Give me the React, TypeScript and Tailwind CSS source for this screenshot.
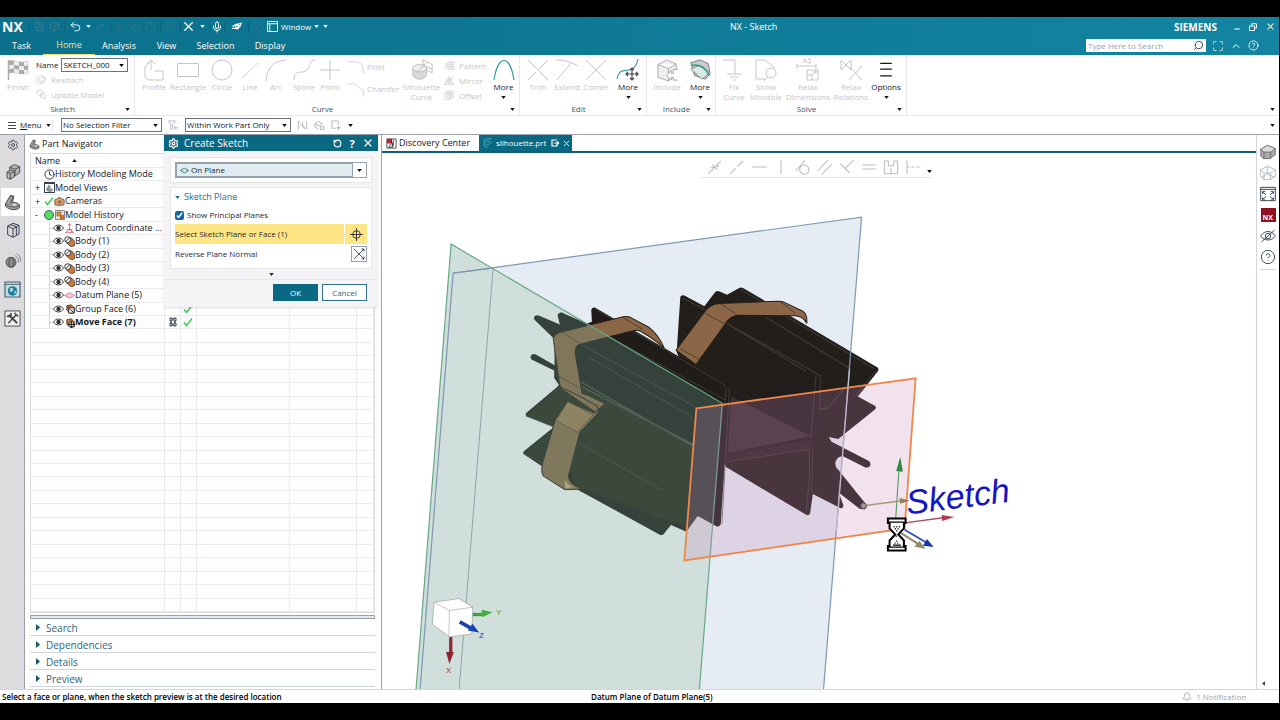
import React from 'react';
import {
  Bell, Box, Camera, ChevronUp, CircleHelp, Clipboard, Clock, Copy,
  Maximize, Mic, Minus, Printer, Redo2, RotateCcw, Save, Scissors, Search, Settings, Undo2, X,
} from 'lucide-react';

type IconProps = { d: string; size?: string; box?: string; width?: number; fill?: string };

const Glyph: React.FC<IconProps> = ({ d, size = 'h-6 w-6', box = '0 0 24 24', width = 1, fill = 'none' }) => (
  <svg viewBox={box} className={`${size} shrink-0`} fill={fill} stroke="currentColor" strokeWidth={width} aria-hidden="true">
    <path d={d} />
  </svg>
);

const Caret = ({ className = '' }: { className?: string }) => (
  <svg viewBox="0 0 6 4" className={`h-[3px] w-[5px] shrink-0 ${className}`} fill="currentColor" aria-hidden="true">
    <path d="M0 0h6L3 4z" />
  </svg>
);

type DropProps = { label: string; options: string[]; className?: string };

const Drop: React.FC<DropProps> = ({ label, options, className = '' }) => (
  <span className={`relative flex items-center ${className}`}>
    <select aria-label={label} className="h-[14px] w-full appearance-none border border-gray-500 bg-white pl-px pr-2 text-[8px] leading-[12px] text-gray-900">
      {options.map((o) => <option key={o}>{o}</option>)}
    </select>
    <Caret className="pointer-events-none absolute right-1 text-black" />
  </span>
);

/* ---------- Title bar ---------- */

const Sep = () => <span className="h-3 w-px bg-[#0a627b]" />;

const quickTools = [
  { label: 'Save', icon: Save },
  { label: 'Model', icon: Box },
];

const menuTabs = ['Task', 'Home', 'Analysis', 'View', 'Selection', 'Display'];
const tabWidths = ['w-[43px]', 'w-[52px]', 'w-12', 'w-[47px]', 'w-[51px]', 'w-[58px]'];

const TitleBar = () => (
  <header className="bg-linear-to-r from-[#0b718c] to-[#1284a1] text-white">
    <div className="relative flex h-[19px] items-center">
      <div className="flex items-center">
        <span className="w-[29px] pl-[2px] text-[14px] leading-none font-bold">NX</span>
        <Sep />
        <div className="flex items-center gap-1 px-1 text-[#3d7d93]">
          {quickTools.map(({ label, icon: Icon }) => (
            <button key={label} aria-label={label}><Icon size={11} strokeWidth={1.8} /></button>
          ))}
        </div>
        <Sep />
        <button aria-label="Undo" className="ml-1"><Undo2 size={13} strokeWidth={1.7} /></button>
        <Caret className="mx-1" />
        <div className="flex items-center gap-1 text-[#2f768e]">
          <button aria-label="Redo"><Redo2 size={11} strokeWidth={1.8} /></button>
          <Sep />
          <button aria-label="Cut"><Scissors size={11} strokeWidth={1.8} /></button>
          <button aria-label="Copy"><Copy size={11} strokeWidth={1.8} /></button>
          <button aria-label="Paste"><Clipboard size={11} strokeWidth={1.8} /></button>
          <Sep />
          <button aria-label="Print"><Printer size={11} strokeWidth={1.8} /></button>
          <Sep />
        </div>
        <button aria-label="Delete"><X size={15} strokeWidth={2} /></button>
        <Caret className="mx-1" />
        <Sep />
        <button aria-label="Voice command" className="mx-px"><Mic size={12} strokeWidth={2} /></button>
        <Sep />
        <button aria-label="Touch mode" className="mx-1.5"><Glyph size="h-[11px] w-[11px]" width={2.4} d="M2 16h8a5 5 0 1 0 0-8l-7 4m7-4 12-3-3 8M10 12a3 3 0 1 0 6 0 3 3 0 0 0-6 0" /></button>
        <Sep />
        <button aria-label="Switch window" className="mx-1 text-[#2f768e]"><Copy size={10} strokeWidth={1.8} /></button>
        <button className="flex items-center gap-[3px] text-[8px] leading-none">
          <Glyph size="h-[11px] w-[11px]" box="0 0 12 12" d="M.5.5h11v11H.5zM.5 3h11M3 3v8" />
          Window
          <Caret />
        </button>
        <Caret className="ml-1" />
      </div>
      <h1 className="absolute left-[730px] text-[9px] leading-none">NX - Sketch</h1>
      <div className="ml-auto flex items-center pr-[3px]">
        <span className="mr-4 text-[10px] leading-none font-bold">SIEMENS</span>
        <button aria-label="Minimize" className="mr-2 pt-1"><Minus size={8} strokeWidth={3} /></button>
        <button aria-label="Restore" className="mr-2"><Glyph size="h-2 w-2" box="0 0 8 8" d="M.5 3h5v4.500h-5zM2.500 3V.8h5v4.200h-2" /></button>
        <button aria-label="Close"><X size={11} strokeWidth={2.2} /></button>
      </div>
    </div>
    <div className="flex h-[19px] items-stretch">
      <nav className="flex">
        {menuTabs.map((t, i) => (
          <button
            key={t}
            className={`${tabWidths[i]} text-center text-[9px] leading-[18px] ${t === 'Home' ? 'border-b border-[#f2e27a] text-[#f2e27a]' : ''}`}
          >
            {t}
          </button>
        ))}
      </nav>
      <div className="ml-auto flex items-center gap-1.5 pr-5">
        <label className="flex h-[13px] w-[120px] items-center bg-white pr-0.5 text-gray-700">
          <input aria-label="Search commands" placeholder="Type Here to Search" className="h-full min-w-0 flex-1 px-0.5 text-[8px] placeholder:text-gray-400" />
          <Search size={11} strokeWidth={2} className="-scale-x-100" />
        </label>
        <button aria-label="Full screen"><Maximize size={12} strokeWidth={1.5} /></button>
        <button aria-label="Collapse ribbon"><ChevronUp size={12} strokeWidth={2} /></button>
        <button aria-label="Help"><CircleHelp size={11} strokeWidth={1.8} /></button>
      </div>
    </div>
  </header>
);

/* ---------- Ribbon ---------- */

type ToolProps = { label: string; width: string; active?: boolean; children: React.ReactNode };

const Tool: React.FC<ToolProps> = ({ label, width, active, children }) => (
  <button className={`${width} flex flex-col items-center text-[8px] leading-[10px] ${active ? 'text-gray-900' : 'text-[#c6c5ca]'}`}>
    <span className="flex h-6 items-center justify-center">{children}</span>
    <span className="whitespace-pre text-center">{label}</span>
    {active && <Caret className="mt-1" />}
  </button>
);

const MiniTool = ({ label, d }: { label: string; d: string }) => (
  <button className="flex h-[15px] items-center gap-1 text-[8px] leading-none text-[#c6c5ca]">
    <Glyph size="h-[11px] w-[11px]" width={1.5} d={d} />
    {label}
  </button>
);

type GroupProps = { name: string; children: React.ReactNode };

const Group: React.FC<GroupProps> = ({ name, children }) => (
  <section aria-label={name} className="relative flex flex-col border-r border-gray-200">
    <div className="flex h-[48px] items-start pt-[3px]">{children}</div>
    <div className="flex h-3 items-center">
      <span className="flex-1 text-center text-[8px] leading-[10px] text-[#33586a]">{name}</span>
      <button aria-label={`${name} options`} className="mr-1"><Caret /></button>
    </div>
  </section>
);

const Flag = () => (
  <svg viewBox="0 0 22 22" className="h-[22px] w-[22px]" aria-hidden="true">
    <path d="M1.500 1v20" stroke="#aaa" strokeWidth="1.500" />
    <path d="M2 2c6-2 10 3 19 0v12c-8 3-12-2-19 0z" fill="#eee" stroke="#bbb" strokeWidth=".6" />
    <path d="M2 2l5-.3v4L2 6zM12 3l5 .2v4l-5-.5zM7 6l5 .7v4L7 9.500zM17 7l4-.6v4l-4 .7zM2 10l5-.5v4L2 14zM12 11l5 .2v4l-5-.7z" fill="#aaa" />
  </svg>
);

const Ribbon = () => (
  <div className="flex border-b border-gray-200 bg-white text-gray-900">
    <Group name="Sketch">
      <Tool label="Finish" width="w-9"><Flag /></Tool>
      <div className="flex w-[98px] flex-col pr-1.5">
        <div className="flex h-[14px] items-center gap-[3px] text-[8px]">
          <span>Name</span>
          <Drop label="Sketch name" options={['SKETCH_000']} className="flex-1" />
        </div>
        <MiniTool label="Reattach" d="M2 8l8-5 10 4v9l-9 6-9-5zM8 10l4-4 6 3-2 8-7 1z" />
        <MiniTool label="Update Model" d="M3 4l8-2 4 5v6l-8 2-5-5zM10 10l7-2 5 6-3 7-7-1-3-5zM13 15h5" />
      </div>
    </Group>
    <Group name="Curve">
      <div className="flex pl-0.5">
        <Tool label="Profile" width="w-[34px]"><Glyph d="M9 12V2L3 9v8c0 5 4 5 8 5h10v-9h-8M5 6l4-4 4 4" /></Tool>
        <Tool label="Rectangle" width="w-[34px]"><Glyph d="M1.500 5.500h21v13h-21z" /></Tool>
        <Tool label="Circle" width="w-[34px]"><Glyph d="M12 2a10 10 0 1 0 0 20 10 10 0 0 0 0-20z" /></Tool>
        <Tool label="Line" width="w-[22px]"><Glyph size="h-6 w-5" d="M2 22L22 3" /></Tool>
        <Tool label="Arc" width="w-[30px]"><Glyph d="M2 23C3 10 9 3 22 2" /></Tool>
        <Tool label="Spline" width="w-[26px]"><Glyph d="M2 22c0-12 8-5 13-10 4-4 1-9 8-10" /></Tool>
        <Tool label="Point" width="w-[26px]"><Glyph d="M12 2v20M2 12h20" /></Tool>
      </div>
      <div className="flex w-[58px] flex-col gap-1 pl-1 text-[8px] text-[#c6c5ca]">
        <button className="flex items-center gap-0.5"><Glyph size="h-[18px] w-[18px]" d="M1 5h10c8 0 11 5 11 16" />Fillet</button>
        <button className="flex items-center gap-0.5"><Glyph size="h-[18px] w-[18px]" d="M1 5h8l13 9v8" />Chamfer</button>
      </div>
      <Tool label={'Silhouette\nCurve'} width="w-[41px]">
        <svg viewBox="0 0 24 24" className="h-[22px] w-[22px]" aria-hidden="true">
          <path d="M2 10v8c3 6 14 5 15-1V9" fill="#d8d8d8" stroke="#bbb" />
          <ellipse cx="9.500" cy="10" rx="7.500" ry="4" fill="#efefef" stroke="#bbb" />
          <path d="M8 13l9-9M13 1l10 5v9l-6-3M13 1v6l10 4" fill="none" stroke="#bbb" />
        </svg>
      </Tool>
      <div className="flex w-[46px] flex-col pl-0.5">
        <MiniTool label="Pattern" d="M1 20L7 6v14M10 4h5v7h-5zM17 4h5v7h-5zM10 14h5v7h-5zM17 14h5v7h-5z" />
        <MiniTool label="Mirror" d="M1 21h8L9 8zM14 21h8L14 8zM11.500 2v21M2 16L21 4" />
        <MiniTool label="Offset" d="M2 6h12v15H2zM7 2h13v15H7zM10 6h7v7h-7z" />
      </div>
      <Tool label="More" width="w-[31px]" active>
        <span className="text-[#3f9d9d]"><Glyph size="h-6 w-6" width={1.2} d="M2 22C6-4 18-4 22 22" /></span>
      </Tool>
    </Group>
    <Group name="Edit">
      <div className="flex pl-1">
        <Tool label="Trim" width="w-7"><Glyph d="M2 2l20 20M22 2l-9 9M2 22l8-8" /></Tool>
        <Tool label="Extend" width="w-[30px]"><Glyph d="M1 2c9 0 15 2 22 6M16 5L2 22" /></Tool>
        <Tool label="Corner" width="w-7"><Glyph d="M2 2l20 20M22 2L2 22" /></Tool>
        <Tool label="More" width="w-9" active>
          <svg viewBox="0 0 24 24" className="h-6 w-6" fill="none" aria-hidden="true">
            <path d="M1 21c2-10 7-8 12-9S21 8 22 1" stroke="#3f9d9d" strokeWidth="1.200" />
            <path d="M16 10v12M10 16h12M14 12l2-2 2 2M14 20l2 2 2-2M12 14l-2 2 2 2M20 14l2 2-2 2" stroke="#444" strokeWidth="1.200" />
          </svg>
        </Tool>
      </div>
    </Group>
    <Group name="Include">
      <div className="flex pl-0.5">
        <Tool label="Include" width="w-9">
          <svg viewBox="0 0 24 24" className="h-[23px] w-[23px]" fill="#eee" stroke="#aaa" aria-hidden="true">
            <path d="M2 6l9-5 10 4v12l-8 6-11-4zM2 6l11 4 8-5M13 10v13" />
            <path d="M23 11h-5v4h-2v-3l-5 5 5 5v-3h2v3h5" fill="#fff" />
          </svg>
        </Tool>
        <Tool label="More" width="w-[30px]" active>
          <svg viewBox="0 0 24 24" className="h-[22px] w-[22px]" aria-hidden="true">
            <path d="M2 4l10-3 9 4 2 11-5 6-12-4z" fill="#c9cccb" stroke="#777" />
            <path d="M2 11l9-4 12 8-9 7z" fill="#d8eae5" stroke="#888" />
            <path d="M2 7c10-2 16 2 20 11" fill="none" stroke="#2e9a8e" strokeWidth="1.600" />
          </svg>
        </Tool>
      </div>
    </Group>
    <Group name="Solve">
      <Tool label={'Fix\nCurve'} width="w-9"><Glyph d="M1 2h12v14M5 16h15M8 19h9M11 22h3" /></Tool>
      <Tool label={'Show\nMovable'} width="w-7"><Glyph d="M2 2h9l10 8M2 2v19h10l2-2M17 10a5 5 0 1 0 0 10 5 5 0 0 0 0-10zM14 19l-4 4" /></Tool>
      <Tool label={'Relax\nDimensions'} width="w-14">
        <Glyph d="M1 6v5M1 8h19M20 6v5M7 5l2-4 2 4M12 1h2v4h-2M11 12h11v10H11zM11 17h5v5M16 17l4-4M17 13h3v3" />
      </Tool>
      <Tool label={'Relax\nRelations'} width="w-[30px]"><Glyph d="M2 2v10l10-10v10zM10 22L23 8M11 9l12 13" /></Tool>
      <Tool label="Options" width="w-10" active><Glyph size="h-5 w-5" width={1.6} d="M5 4h14M5 11h14M5 19h14" /></Tool>
    </Group>
    <button aria-label="Ribbon options" className="mr-1 mb-1 ml-auto self-end"><Caret /></button>
  </div>
);

const SelectionBar = () => (
  <div className="flex h-[19px] items-center border-b border-gray-400 bg-white text-[9px] text-gray-900">
    <button className="ml-2 flex w-[45px] items-center gap-1 border-r border-gray-200 text-[8px]">
      <Glyph size="h-2 w-2" box="0 0 8 8" width={0.8} d="M0 1.500h8M0 4.500h8M0 7.500h8" />
      <span><u>M</u>enu</span>
      <Caret />
    </button>
    <Drop label="Selection filter" options={['No Selection Filter']} className="ml-2 w-[101px]" />
    <button aria-label="Reset filters" className="mx-1.5 text-gray-400"><Glyph size="h-[11px] w-[11px]" width={1.5} d="M1 2h15l-6 8v9l-4 2V10zM14 17h8M18 13l-4 4 4 4" /></button>
    <Drop label="Selection scope" options={['Within Work Part Only']} className="w-[106px]" />
    <div className="flex items-center gap-1.5 pl-1.5 text-gray-400">
      <button aria-label="Snap"><Glyph size="h-[11px] w-[11px]" width={1.6} d="M3 3v18M6 3L3 3M21 3v18M6 8l12 9M12 4v8l5 8" /></button>
      <button aria-label="Highlight"><Glyph size="h-[11px] w-[11px]" width={1.6} d="M2 8l8-5 8 5-8 5zM2 8v7l8 5M14 14h8v7h-8z" /></button>
      <button aria-label="Rectangle select"><Glyph size="h-[11px] w-[11px]" width={1.6} d="M2 2h14v9M2 2v16h8M16 13v9M12 17h9" /></button>
      <Caret className="text-black" />
    </div>
    <button aria-label="Bar options" className="mr-1 ml-auto"><Caret /></button>
  </div>
);

/* ---------- Left side ---------- */

const Part = ({ size = 'h-3 w-3', fill = '#9d9d9d' }: { size?: string; fill?: string }) => (
  <svg viewBox="0 0 24 24" className={`${size} shrink-0`} aria-hidden="true">
    <path d="M2 14L9 2l5 1-2 9c5 0 9 1 10 4v3c-4 5-15 4-20-2z" fill={fill} stroke="#444" strokeWidth="1.300" />
    <path d="M2 14c5 5 14 6 20 2M9 2l3 3-3 9" fill="none" stroke="#444" />
    <ellipse cx="15" cy="15" rx="3" ry="1.500" fill="#ddd" />
  </svg>
);

const Rail = () => (
  <nav aria-label="Resource bar" className="flex w-[25px] shrink-0 flex-col items-end border-r border-gray-400 bg-[#dedbdf] text-gray-700">
    <button aria-label="Settings" className="flex h-5 w-[23px] items-center justify-center"><Settings size={12} strokeWidth={1.8} /></button>
    <button aria-label="Assembly Navigator" className="flex h-[33px] w-[23px] items-center justify-center">
      <svg viewBox="0 0 24 24" className="h-4 w-4" fill="#b5b5b5" stroke="#444" strokeWidth="1.300" aria-hidden="true">
        <path d="M7 5l7-4 8 3v9l-7 5-8-3z" /><path d="M7 5l8 3 7-4M15 8v9" fill="none" />
        <path d="M3 12l5-3 6 2v8l-6 4-5-2z" /><path d="M3 12l5 2 6-3M8 14v9" fill="none" />
      </svg>
    </button>
    <button aria-label="Part Navigator" className="flex h-7 w-[23px] items-center justify-center bg-white"><Part size="h-[17px] w-[17px]" /></button>
    <button aria-label="Reuse Library" className="flex h-7 w-[23px] items-center justify-center">
      <Glyph size="h-4 w-4" width={1.5} d="M4 6l8-4 9 3v13l-9 5-8-4zM4 6l8 4 9-5M12 10v13M8 4l9 3v13" />
    </button>
    <button aria-label="Sensors" className="flex h-[33px] w-[23px] items-center justify-center">
      <svg viewBox="0 0 24 24" className="h-4 w-4" fill="none" stroke="#777" strokeWidth="1.300" aria-hidden="true">
        <circle cx="9" cy="14" r="7.500" fill="#8c8c8c" stroke="#444" />
        <path d="M8 7c-3 5-3 10 0 15M11 7c3 5 3 10 0 15" stroke="#444" />
        <path d="M15 4c4 2 6 6 5 10M17 1c5 2 7 7 6 12" />
      </svg>
    </button>
    <button aria-label="Web browser" className="flex h-[25px] w-[23px] items-center justify-center">
      <svg viewBox="0 0 18 18" className="h-[17px] w-[17px]" aria-hidden="true">
        <path d="M1 1h16v16H1z" fill="#cfd9dc" stroke="#3c6572" strokeWidth="1.200" /><path d="M1 3.500h16" stroke="#3c6572" />
        <circle cx="9" cy="10.500" r="5" fill="#1d7f9d" /><path d="M6 8l3-1 1 3-3 2zM11 11l2-1v2l-2 2z" fill="#b5dbe6" />
      </svg>
    </button>
    <button aria-label="Tools" className="flex h-[33px] w-[23px] items-center justify-center">
      <svg viewBox="0 0 18 18" className="h-[17px] w-[17px]" fill="none" stroke="#444" aria-hidden="true">
        <path d="M1 1h16v16H1z" fill="#f2f2f2" strokeWidth="1" />
        <path d="M5 5l9 9" strokeWidth="2" /><path d="M13 5l-8.500 9" strokeWidth="1.600" />
        <path d="M3 6a2.500 2.500 0 0 0 4-3M11 3l4 4" strokeWidth="1.500" />
      </svg>
    </button>
  </nav>
);

type Node = { name: string; kind: 'history' | 'views' | 'cameras' | 'model' | 'csys' | 'body' | 'plane' | 'face' | 'move'; mark?: string; bold?: boolean };

const nodes: Node[] = [
  { name: 'History Modeling Mode', kind: 'history' },
  { name: 'Model Views', kind: 'views', mark: '+' },
  { name: 'Cameras', kind: 'cameras', mark: '+' },
  { name: 'Model History', kind: 'model', mark: '-' },
  { name: 'Datum Coordinate ...', kind: 'csys' },
  { name: 'Body (1)', kind: 'body' },
  { name: 'Body (2)', kind: 'body' },
  { name: 'Body (3)', kind: 'body' },
  { name: 'Body (4)', kind: 'body' },
  { name: 'Datum Plane (5)', kind: 'plane' },
  { name: 'Group Face (6)', kind: 'face' },
  { name: 'Move Face (7)', kind: 'move', bold: true },
];

const Check = () => (
  <span className="text-[#3fcf58]"><Glyph size="h-[10px] w-[10px]" box="0 0 10 10" width={1.5} d="M1 5.500L3.500 8.500 9 1.500" /></span>
);

const Eye = () => (
  <svg viewBox="0 0 12 8" className="h-2 w-[11px] shrink-0" aria-hidden="true">
    <path d="M.5 4C3-.3 9-.3 11.500 4 9 8.300 3 8.300.5 4z" fill="#fff" stroke="#333" />
    <circle cx="6" cy="4" r="2.400" fill="#333" />
  </svg>
);

const NodeIcon = ({ kind }: { kind: Node['kind'] }) => {
  switch (kind) {
    case 'history': return <Clock size={11} strokeWidth={1.8} className="shrink-0" />;
    case 'views': return <span className="flex h-[11px] w-[11px] items-center justify-center border border-t-2 border-gray-700"><Part size="h-[7px] w-[7px]" /></span>;
    case 'cameras': return <><Check /><Camera size={11} strokeWidth={2} fill="#e2a36c" className="shrink-0 text-[#6b4a30]" /></>;
    case 'model': return (
      <>
        <span className="h-[10px] w-[10px] shrink-0 rounded-full border border-gray-600 bg-[#4fe05c]" />
        <svg viewBox="0 0 10 10" className="ml-px h-[10px] w-[10px] shrink-0" aria-hidden="true">
          <path d="M.5.5h9v9h-9z" fill="#e9e4de" stroke="#888" /><path d="M2 2h4v4H2z" fill="#e8903a" stroke="#7a4a1a" strokeWidth=".6" /><path d="M5 5h4v4H5z" fill="#c96f20" />
        </svg>
      </>
    );
    case 'csys': return <span className="text-[#c04a6a]"><Glyph size="h-[11px] w-[11px]" width={1.6} d="M12 2v12L3 21h18l-9-7M9 5l3-4 3 4M7 14h10v7" /></span>;
    case 'plane': return <span className="text-[#cc5f86]"><Glyph size="h-[11px] w-[11px]" width={1.5} fill="#f6c7d8" d="M1 12l11-6 11 6-11 6z" /></span>;
    default: return (
      <svg viewBox="0 0 12 12" className="h-[11px] w-[11px] shrink-0" aria-hidden="true">
        <path d="M3 3l5-1 4 4v4l-4 2-5-4z" fill="#c67a3e" stroke="#4a2c14" strokeWidth=".8" />
        {kind === 'body' && <g fill="#fff" stroke="#222"><circle cx="4" cy="4" r="3.200" /><path d="M2 6l4-4" /></g>}
        {kind === 'face' && <path d="M5 5h6v6H5zM5 5l6 6M3 3h3" fill="#ddd" stroke="#333" />}
        {kind === 'move' && <g stroke="#222"><circle cx="8" cy="8" r="3" fill="#fff" /><path d="M8 4v8M4 8h8" strokeWidth="1.200" /></g>}
      </svg>
    );
  }
};

const treeRows: (Node | null)[] = [...nodes, ...Array<null>(21).fill(null)];
const cell = 'border-r border-b border-[#ececf0] p-0';

const Navigator = () => (
  <div className="flex w-[356px] shrink-0 flex-col bg-white pl-1 text-gray-900">
    <h2 className="flex h-[18px] shrink-0 items-center gap-[2px] text-[9px]"><Part size="h-[11px] w-[11px]" />Part Navigator</h2>
    <div className="mr-1.5 ml-px min-h-0 flex-1 overflow-hidden border border-[#dcdce0]">
      <table className="h-full w-full table-fixed border-collapse text-[9px] leading-[12px]">
        <colgroup>
          <col className="w-[133px]" /><col className="w-4" /><col className="w-4" />
          <col className="w-[93px]" /><col className="w-[67px]" /><col />
        </colgroup>
        <thead>
          <tr className="text-left">
            <th className={`${cell} font-normal`} colSpan={6}>
              <span className="flex h-[13px] items-center gap-3 pl-1">Name <Caret className="rotate-180" /></span>
            </th>
          </tr>
        </thead>
        <tbody>
          {treeRows.map((n, i) => {
            const child = n && i > 3;
            return (
              <tr key={i} className="odd:bg-white even:bg-[#fdfcfe]">
                <td className={cell}>
                  <div className={`flex h-[12px] items-center whitespace-nowrap ${n?.bold ? 'font-bold' : ''}`}>
                    {n && (
                      <>
                        {child
                          ? <span className="ml-[18px] flex h-full w-1 shrink-0 items-center border-l border-gray-300"><span className="h-px w-1 bg-gray-300" /></span>
                          : <span className="w-[13px] shrink-0 pl-1 leading-none">{n.mark}</span>}
                        {child && <Eye />}
                        <NodeIcon kind={n.kind} />
                        <span>{n.name}</span>
                      </>
                    )}
                  </div>
                </td>
                <td className={cell}>{n?.kind === 'move' && <Glyph size="ml-1 h-[10px] w-2" box="0 0 8 10" width={0.8} d="M1 1h2v3H1zM5 1h2v3H5zM1 6h2v3H1zM5 6h2v3H5zM3 2h2M3 8h2M2 4v2M6 4v2" />}</td>
                <td className={cell}><span className="flex justify-center">{child && <Check />}</span></td>
                <td className={cell} />
                <td className={cell} />
                <td className={cell} />
              </tr>
            );
          })}
        </tbody>
      </table>
    </div>
    <div className="mt-0.5 mr-1.5 ml-px h-1 shrink-0 border border-gray-400 bg-gray-200" />
    <div className="mr-1.5 mb-0.5 ml-px shrink-0">
      {['Search', 'Dependencies', 'Details', 'Preview'].map((s) => (
        <button key={s} className="flex h-[17px] w-full items-center gap-1.5 border-b border-gray-300 pl-1.5 pt-px text-[10px] leading-none text-[#2f6478]">
          <svg viewBox="0 0 4 7" className="h-[7px] w-1" fill="#14566a" aria-hidden="true"><path d="M0 0l4 3.500L0 7z" /></svg>
          {s}
        </button>
      ))}
    </div>
  </div>
);

const CreateSketch = () => (
  <section role="dialog" aria-label="Create Sketch" className="absolute top-0 left-[164px] w-[214px] bg-[#f4f3f5] pb-1.5 text-[8px] text-gray-800 shadow-sm">
    <div className="flex h-4 items-center bg-[#0b6883] px-1 text-white">
      <Settings size={11} strokeWidth={2.5} />
      <h2 className="flex-1 pl-[5px] text-[10px] leading-none">Create Sketch</h2>
      <button aria-label="Reset" className="mr-1.5"><RotateCcw size={9} strokeWidth={3} /></button>
      <button aria-label="Dialog help" className="mr-1.5 w-2 text-[11px] leading-none font-bold">?</button>
      <button aria-label="Close dialog"><X size={12} strokeWidth={2.5} /></button>
    </div>
    <div className="mx-1.5 mt-1.5 border border-gray-200 bg-white p-1">
      <div className="relative flex h-4 items-center border border-gray-400">
        <span className="pointer-events-none absolute left-1 text-[#277a78]"><Glyph size="h-[9px] w-[9px]" width={2.5} d="M1 12l11-6 11 6-11 6z" /></span>
        <select aria-label="Sketch type" className="h-[14px] w-[177px] appearance-none border border-gray-400 bg-[#e0edf0] pl-3.5 text-[8px] leading-[12px]">
          <option>On Plane</option>
        </select>
        <Caret className="pointer-events-none absolute right-1 text-black" />
      </div>
    </div>
    <div className="mx-1.5 mt-1 border border-gray-200 bg-white px-1 pb-1">
      <h3 className="flex h-[18px] items-center gap-1 text-[9px] text-[#1f6d84]"><Caret />Sketch Plane</h3>
      <label className="flex h-[18px] items-center gap-[3px]">
        <input type="checkbox" defaultChecked className="m-0 h-[9px] w-[9px] accent-[#0f67a8]" />
        Show Principal Planes
      </label>
      <div className="flex h-5 gap-px">
        <span className="flex flex-1 items-center bg-[#ffe583]">Select Sketch Plane or Face (1)</span>
        <button aria-label="Pick plane" className="flex w-[22px] items-center justify-center bg-[#ffe583]">
          <Glyph size="h-[13px] w-[13px]" width={1.6} d="M12 0v24M0 12h24M12 5a7 7 0 1 0 0 14 7 7 0 0 0 0-14z" />
        </button>
      </div>
      <div className="flex h-5 items-center justify-between">
        <span>Reverse Plane Normal</span>
        <button aria-label="Reverse plane normal" className="flex h-4 w-4 items-center justify-center border border-gray-400">
          <Glyph size="h-3 w-3" width={1.6} d="M2 2l20 20M22 2L2 22M17 2h5v5M17 22h5v-5" />
        </button>
      </div>
    </div>
    <button aria-label="Show more" className="flex h-[11px] w-full items-center justify-center border-b border-gray-200"><Caret /></button>
    <div className="mt-1 mr-[11px] flex justify-end gap-1 text-[8px]">
      <button className="h-[17px] w-[45px] bg-[#0b6883] text-white">OK</button>
      <button className="h-[17px] w-[45px] border border-[#2f7288] bg-white text-[#2f6478]">Cancel</button>
    </div>
  </section>
);

/* ---------- Graphics window ---------- */

const HeatSink = () => (
  <g transform="translate(500 270) scale(.33333)" strokeLinejoin="round">
    {/* rear block */}
    <path d="M532 245L543 80q4-7 12-4l60 32 32-42q6-6 14-2l22 10 35-20q7-4 14 0l402 238q5 5 1 11l-60 76 52 28q4 5 0 10L1016 506l-28-6 8 14 112 58q9 9 1 18l-10 2-70-35c-22 4-28 26-14 40l84 104q6 10-4 16l-15-2-62-48 14 38q-2 10-10 8l-82-42-8 56q-2 10-12 6L680 590z" fill="#221e1a" />
    <path d="M670 380l280-66 10 180-280 90z" fill="#211d1c" />
    <path d="M695 378l240 120-250 50z" fill="#3a302f" />
    <path d="M684 550l252-42v28l-254 38z" fill="#2c2323" />
    <g fill="none" stroke="#413a36" strokeWidth="3">
      <path d="M682 160l280 155v105l20-10M950 312l-16 190M680 575l250-38v80l-10 112M800 142l255 155M690 165l230 138M1130 300l-62 76" />
      <path d="M725 58l400 238M550 84l66 34M940 535l-4 130M965 415h18l60-70" />
    </g>
    {/* front block */}
    <path d="M278 155l-2-36q4-9 12-6l404 235-28 414q-4 8-12 6l-57-31-34 47-46-20-23 28q-6 4-12 0L230 655 74 552q-4-4 0-9l90-73-82-33q-5-5 0-10l98-82-15-22v-22L97 268q-6-8 1-15 6-4 12 0l56 32v-78l-60-58q-4-8 2-12 6-3 12 0l62 26-7-28q2-8 10-8 6-1 10 4l68 29z" fill="#1f1c19" />
    <path d="M240 345l340 180-20 245-330-120-60-190z" fill="#27271a" />
    <path d="M80 437l98-86 64 36-70 84zM76 550l90-78 40 20-40 90z" fill="#27271a" />
    <g fill="none" stroke="#4a4a44" strokeWidth="2">
      <path d="M245 335l332 190M250 350l330 172" strokeWidth="4" />
      <path d="M690 350l-22 410M680 352l-4 60M250 225l330 180M330 200l350 190M270 262l310 180M225 510l260 148" />
      <path d="M80 437l90 36M76 552l60 28M290 118l390 228" />
    </g>
    {/* spring clips */}
    <path d="M530 240L612 130q18-28 48-30l180-7q10 0 20 6l50 24q14 10 12 36-14-24-40-22l-165-2q-26 2-38 24l-89 124z" fill="#8b6747" stroke="#2a1f16" strokeWidth="3" />
    <path d="M662 100l55 36M615 128l66 36M543 236l58 32M842 94l46 36" stroke="#3b2b1d" strokeWidth="2" />
    <path d="M162 205q4-16 30-21l180-44q16-3 30 6l48 26q28 22 44 60-36-30-66-46-12-8-24-5l-160 40q-18 5-16 28l22 130 40 22q14 12 6 30L192 360q-12-10-14-40z" fill="#8b6747" stroke="#2a1f16" strokeWidth="3" />
    <path d="M190 186l52 34M372 142l58 36M166 312l74 40" stroke="#3b2b1d" strokeWidth="2" />
    <path d="M176 346l70 34 46 26q12 14-2 30l-48 50-34 130q0 16 20 30l20 10-50 2-64-40q-10-10-4-40l38-130 38-54 80 34 32-28-42-20" fill="#8b6a48" stroke="#2a1f16" strokeWidth="3" />
    <path d="M206 394l76 40-48 52-64-36z" fill="#a07c52" stroke="#4a3826" strokeWidth="2" />
    <path d="M196 622q4 20 28 28l-26 4z" fill="#c3ab7e" />
  </g>
);

const Canvas = () => (
  <svg viewBox="383 153 873 536" preserveAspectRatio="xMinYMin slice" className="absolute inset-0 h-full w-full" role="img" aria-label="Model view">
    <path d="M454 273L862 217 824 689H421z" fill="#e5ecf3" />
    <path d="M452 244L723 403 700 689H417z" fill="#fff" />
    <HeatSink />
    <path d="M452 244L723 403 700 689H417z" fill="#68988a" fillOpacity=".31" />
    <path d="M494 268L460 689M454 273L494 268" stroke="#8fa5ab" fill="none" />
    <path d="M824 689L862 217 454 273 421 689" stroke="#7f98b3" strokeWidth="1.200" fill="none" />
    <path d="M850 369l-13 161" stroke="#c6c8d0" strokeWidth="1.200" />
    <path d="M417 689L452 244 723 403 700 689" stroke="#68a886" strokeWidth="1.200" fill="none" />
    <path d="M697 408L916 378 905 528 685 560z" fill="#c882b4" fillOpacity=".23" stroke="#f0874a" strokeWidth="1.800" />

    {/* sketch coordinate system */}
    <g transform="translate(840 440) scale(.33333)">
      <path d="M168 240l10-150" stroke="#4a9358" strokeWidth="3" /><path d="M170 92l12-42 8 44z" fill="#2f8a42" />
      <path d="M190 248l120-16" stroke="#b14a60" strokeWidth="4" /><path d="M306 224l38 6-36 12z" fill="#b03a52" />
      <path d="M195 268l65 38" stroke="#2b4bb5" strokeWidth="5" /><path d="M262 296l20 24-32-4z" fill="#153aa8" />
      <path d="M180 275l60 38" stroke="#8f8a68" strokeWidth="6" /><path d="M240 302l18 24-34-8z" fill="#8f8a68" />
      <path d="M72 196l116-15" stroke="#a79a78" strokeWidth="5" /><path d="M180 173l30 7-28 10z" fill="#8f7f55" /><circle cx="72" cy="196" r="8" fill="#a59a95" stroke="#6d6260" strokeWidth="3" />
    </g>
    <text x="908" y="514" transform="rotate(-7 908 514)" fontSize="34" fontStyle="italic" fill="#1414c4" fontFamily="'Liberation Sans', Arial, sans-serif">Sketch</text>

    {/* busy cursor */}
    <g transform="translate(840 440) scale(.33333)">
      <path d="M145 234h53v14h-5v16l-17 18 17 18v17h5v13h-53v-13h5v-17l17-18-17-18v-16h-5z" fill="#fff" stroke="#000" strokeWidth="6" />
      <path d="M145 245h53M145 320h53" stroke="#000" strokeWidth="4" />
      <path d="M162 259h3M170 259h3M178 259h3M166 265h3M174 265h3M170 271h3M170 285v4M170 302h3M165 308h3M173 308h3M160 314h24" stroke="#000" strokeWidth="4" />
    </g>

    {/* view triad */}
    <g transform="translate(410 560) scale(.33333)">
      <path d="M190 162h30" stroke="#3c9f3c" strokeWidth="10" /><path d="M218 148l32 7-30 15z" fill="#3faf3f" />
      <path d="M125 228v50" stroke="#93283a" strokeWidth="10" /><path d="M111 274l10 36 13-36z" fill="#93202f" />
      <path d="M75 125l74-11 42 26-3 80-67 9-51-38z" fill="#fff" stroke="#9a9a9a" strokeWidth="2" />
      <path d="M75 125l46 25 70-10M121 150l-2 78" fill="none" stroke="#aaa" strokeWidth="2" />
      <path d="M152 184l36 20" stroke="#1a3fae" strokeWidth="11" /><path d="M190 190l20 26-34-6z" fill="#1a3fae" />
    </g>
    <g fontSize="8" fontFamily="'Liberation Sans', Arial, sans-serif">
      <text x="497" y="614" fill="#3c9f3c">Y</text>
      <text x="480" y="637" fill="#1a3fae">Z</text>
      <text x="447" y="672" fill="#a63248">X</text>
    </g>
  </svg>
);

const constraints = [
  { label: 'Coincident', d: 'M2 22L21 3M8 8l7 8M6 13l12-3' },
  { label: 'Collinear', d: 'M2 22l8-8M13 11l8-8' },
  { label: 'Horizontal', d: 'M2 12h21' },
  { label: 'Vertical', d: 'M12 2v21' },
  { label: 'Tangent', d: 'M1 18L15 2M14 9a7 7 0 1 0 0 14 7 7 0 0 0 0-14z' },
  { label: 'Parallel', d: 'M1 18L16 2M7 23L22 8' },
  { label: 'Perpendicular', d: 'M2 7l14 14M9 14L22 2' },
  { label: 'Equal', d: 'M2 9h20M2 15h20' },
  { label: 'Symmetric', d: 'M2 3h6v7h8V3h6v19H2zM12 13v9' },
  { label: 'Midpoint', d: 'M3 2v21M3 12h4M10 12h4M17 12h6' },
];

const GraphicsWindow = () => (
  <main className="flex min-w-0 flex-1 flex-col border-l border-gray-400 bg-white">
    <div className="flex h-[18px] shrink-0 items-stretch border-b-2 border-[#0b5f78] text-[9px] text-gray-900">
      <button className="flex w-[97px] items-center gap-[2px] pl-1">
        <svg viewBox="0 0 12 12" className="h-[11px] w-[11px]" aria-hidden="true">
          <path d="M1 1h10v10H1z" fill="#fff" stroke="#444" /><path d="M1 1h5v5H1z" fill="#c21d3a" /><path d="M6 1v5l-3 4h4V5M8 2v7" fill="none" stroke="#333" />
        </svg>
        Discovery Center
      </button>
      <div className="flex w-[93px] items-center gap-[3px] bg-[#0b6883] pl-1 text-white">
        <span className="text-[#4fc0c0]"><Glyph size="h-[10px] w-[10px]" width={2} d="M3 5c5-4 12-2 18-3M3 5v14l8 3M7 8h9M7 14c5 4 8 1 13-5" /></span>
        <button className="text-[8px]">silhouette.prt</button>
        <button aria-label="Detach tab" className="ml-0.5"><Glyph size="h-2 w-2" box="0 0 8 8" width={1.2} d="M6 1H1v6h5V5M3 4h5M6 2.500L8 4 6 5.500" /></button>
        <button aria-label="Close tab"><X size={9} strokeWidth={2.5} /></button>
      </div>
    </div>
    <div className="relative min-h-0 flex-1 overflow-hidden">
      <Canvas />
      <div role="toolbar" aria-label="Constraints" className="absolute top-1 left-[319px] flex h-[21px] items-center gap-1.5 border-b border-gray-200 pl-1.5 text-[#bdbdc2]">
        {constraints.map((c) => (
          <button key={c.label} aria-label={c.label}><Glyph size="h-4 w-4" width={1.6} d={c.d} /></button>
        ))}
        <Caret className="mt-2 text-black" />
      </div>
    </div>
  </main>
);

const ViewBar = () => (
  <aside aria-label="View tools" className="flex w-[23px] shrink-0 flex-col items-center gap-[5px] border-l border-gray-300 bg-white pt-[9px] text-gray-700">
    <button aria-label="Shaded">
      <svg viewBox="0 0 24 24" className="h-4 w-4" stroke="#555" aria-hidden="true">
        <path d="M1 8l10-6 12 5v9l-8 6H5l-4-4z" fill="#aaa" /><path d="M1 8l10-6 12 5-7 5H6z" fill="#ddd" /><path d="M6 12v10M16 12v10" />
      </svg>
    </button>
    <button aria-label="Wireframe" className="text-gray-400"><Glyph size="h-4 w-4" d="M1 7l10-5 12 5v10l-8 5H5l-4-5zM1 7l5 5h10l7-5M6 12v10M16 12v10M11 2v12l-9 5M11 14l11 4" /></button>
    <button aria-label="Fit"><Glyph size="h-4 w-4" width={1.4} d="M1 2h22v20H1zM1 5h22M4 9l5 4M20 9l-5 4M4 20l5-4M20 20l-5-4M4 12V8h4M20 12V8h-4M4 17v4h4M20 17v4h-4" /></button>
    <button className="my-px flex h-[14px] w-[15px] items-end bg-[#90101f] pl-0.5 text-[7px] leading-[9px] font-bold text-white">NX</button>
    <button aria-label="Hide"><Glyph size="h-4 w-4" width={1.4} d="M1 12c6-9 16-9 22 0-6 8-16 8-22 0zM12 8a4 4 0 1 0 0 8 4 4 0 0 0 0-8zM2 21L22 3" /></button>
    <button aria-label="View help" className="border-b border-gray-300 pb-1"><CircleHelp size={16} strokeWidth={1.4} /></button>
    <button aria-label="Collapse" className="mt-auto mr-2.5 mb-1"><Caret className="rotate-90" /></button>
  </aside>
);

export default function App() {
  return (
    <div className="flex h-screen flex-col bg-black py-[17px] pr-px font-['Open_Sans','Noto_Sans',sans-serif]">
      <TitleBar />
      <Ribbon />
      <SelectionBar />
      <div className="relative flex min-h-0 flex-1">
        <Rail />
        <Navigator />
        <GraphicsWindow />
        <ViewBar />
        <CreateSketch />
      </div>
      <footer className="flex h-[14px] shrink-0 items-center border-t border-gray-300 bg-white text-[8px] leading-none font-semibold text-black">
        <span className="flex-[590] pl-0.5">Select a face or plane, when the sketch preview is at the desired location</span>
        <span className="flex-[592]">Datum Plane of Datum Plane(5)</span>
        <button className="flex flex-[97] items-center gap-1 font-normal text-gray-400"><Bell size={10} />1 Notification</button>
      </footer>
    </div>
  );
}
